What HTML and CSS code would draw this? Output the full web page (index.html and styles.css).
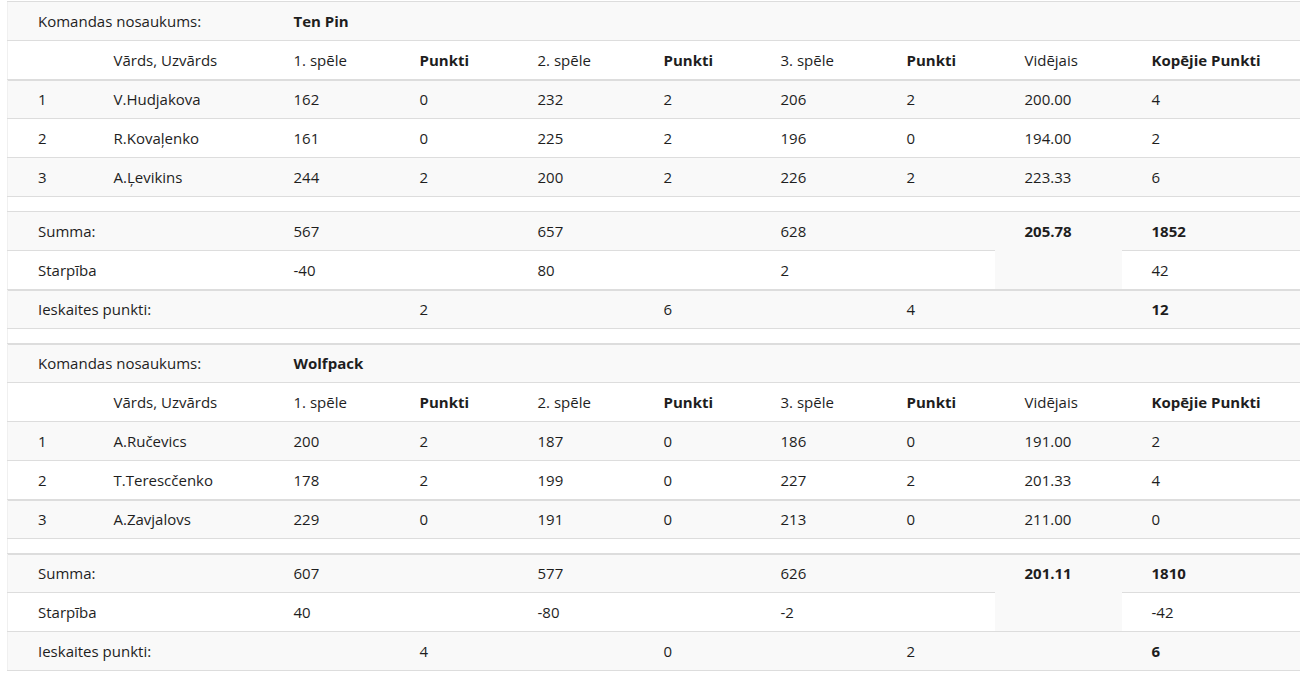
FILE: index.html
```html
<!DOCTYPE html>
<html lang="lv">
<head>
<meta charset="utf-8">
<title>Rezultāti</title>
<link rel="stylesheet" href="styles.css">
</head>
<body>
<div class="page">
<table class="res">
  <colgroup>
    <col class="c1"><col class="c2"><col class="c3"><col class="c4"><col class="c5"><col class="c6"><col class="c7"><col class="c8"><col class="c9"><col class="c10">
  </colgroup>
  <tbody>
    <tr class="odd">
      <td colspan="2">Komandas nosaukums:</td><td colspan="8" class="b">Ten Pin</td>
    </tr>
    <tr>
      <td></td><td>Vārds, Uzvārds</td><td>1. spēle</td><td class="b">Punkti</td><td>2. spēle</td><td class="b">Punkti</td><td>3. spēle</td><td class="b">Punkti</td><td>Vidējais</td><td class="b">Kopējie Punkti</td>
    </tr>
    <tr class="odd thick">
      <td>1</td><td>V.Hudjakova</td><td>162</td><td>0</td><td>232</td><td>2</td><td>206</td><td>2</td><td>200.00</td><td>4</td>
    </tr>
    <tr>
      <td>2</td><td>R.Kovaļenko</td><td>161</td><td>0</td><td>225</td><td>2</td><td>196</td><td>0</td><td>194.00</td><td>2</td>
    </tr>
    <tr class="odd">
      <td>3</td><td>A.Ļevikins</td><td>244</td><td>2</td><td>200</td><td>2</td><td>226</td><td>2</td><td>223.33</td><td>6</td>
    </tr>
    <tr class="spacer"><td colspan="10"></td></tr>
    <tr class="odd">
      <td colspan="2">Summa:</td><td>567</td><td></td><td>657</td><td></td><td>628</td><td></td><td rowspan="2" class="b">205.78</td><td class="b">1852</td>
    </tr>
    <tr>
      <td colspan="2">Starpība</td><td>-40</td><td></td><td>80</td><td></td><td>2</td><td></td><td>42</td>
    </tr>
    <tr class="odd thick">
      <td colspan="2">Ieskaites punkti:</td><td></td><td>2</td><td></td><td>6</td><td></td><td>4</td><td></td><td class="b">12</td>
    </tr>
    <tr class="spacer"><td colspan="10"></td></tr>
    <tr class="odd thick">
      <td colspan="2">Komandas nosaukums:</td><td colspan="8" class="b">Wolfpack</td>
    </tr>
    <tr>
      <td></td><td>Vārds, Uzvārds</td><td>1. spēle</td><td class="b">Punkti</td><td>2. spēle</td><td class="b">Punkti</td><td>3. spēle</td><td class="b">Punkti</td><td>Vidējais</td><td class="b">Kopējie Punkti</td>
    </tr>
    <tr class="odd">
      <td>1</td><td>A.Ručevics</td><td>200</td><td>2</td><td>187</td><td>0</td><td>186</td><td>0</td><td>191.00</td><td>2</td>
    </tr>
    <tr>
      <td>2</td><td>T.Terescčenko</td><td>178</td><td>2</td><td>199</td><td>0</td><td>227</td><td>2</td><td>201.33</td><td>4</td>
    </tr>
    <tr class="odd thick">
      <td>3</td><td>A.Zavjalovs</td><td>229</td><td>0</td><td>191</td><td>0</td><td>213</td><td>0</td><td>211.00</td><td>0</td>
    </tr>
    <tr class="spacer"><td colspan="10"></td></tr>
    <tr class="odd thick">
      <td colspan="2">Summa:</td><td>607</td><td></td><td>577</td><td></td><td>626</td><td></td><td rowspan="2" class="b">201.11</td><td class="b">1810</td>
    </tr>
    <tr>
      <td colspan="2">Starpība</td><td>40</td><td></td><td>-80</td><td></td><td>-2</td><td></td><td>-42</td>
    </tr>
    <tr class="odd">
      <td colspan="2">Ieskaites punkti:</td><td></td><td>4</td><td></td><td>0</td><td></td><td>2</td><td></td><td class="b">6</td>
    </tr>
  </tbody>
</table>
</div>
</body>
</html>
```
FILE: styles.css
```css
html, body {
  margin: 0;
  padding: 0;
  background: #ffffff;
}
body {
  font-family: "Open Sans", "Noto Sans", sans-serif;
  font-size: 15px;
  color: #1e1e1e;
}
.page {
  padding: 1px 0 0 7px;
}
.res {
  width: 1293px;
  border-collapse: collapse;
  table-layout: fixed;
  border-top: 1px solid #e6e6e6;
  border-left: 1px solid #f0f0f0;
}
.c1 { width: 76px; }
.c2 { width: 180px; }
.c3 { width: 126px; }
.c4 { width: 118px; }
.c5 { width: 126px; }
.c6 { width: 117px; }
.c7 { width: 126px; }
.c8 { width: 118px; }
.c9 { width: 127px; }
.c10 { width: 179px; }
.res td {
  padding: 8px 8px 8px 30px;
  line-height: 22px;
  height: 22px;
  vertical-align: top;
  border-top: 1px solid #dddddd;
  white-space: nowrap;
}
.res tr.odd td {
  background: #f9f9f9;
}
.res tr.thick td {
  box-shadow: inset 0 1px 0 #dddddd;
}
.res tr.spacer td {
  padding: 0;
  height: 14px;
  line-height: 14px;
  background: #ffffff;
}
.res tr:last-child td {
  border-bottom: 1px solid #dddddd;
}
.b {
  font-weight: 700;
}
```
